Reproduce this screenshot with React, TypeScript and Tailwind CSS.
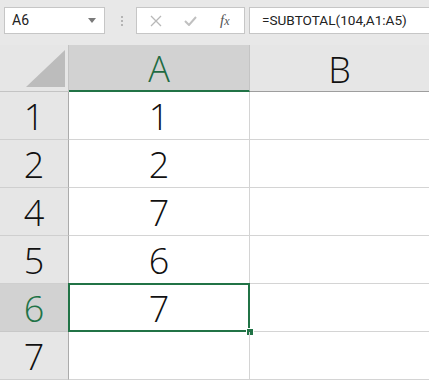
import React from 'react';

const rows = [
  { n: '1', v: '1' },
  { n: '2', v: '2' },
  { n: '4', v: '7' },
  { n: '5', v: '6' },
  { n: '6', v: '7', active: true },
  { n: '7', v: '' },
];

const FormulaBar: React.FC = () => (
  <div className="flex h-[45px] items-start bg-[#e8e8e8] pt-[7px] font-['Roboto',sans-serif]">
    <div className="ml-[4px] flex h-[27px] w-[101px] items-center border border-[#c6c6c6] bg-white pl-[7px] pr-[8px] text-[14px] text-[#222]">
      <span>A6</span>
      <svg className="ml-auto" width="8" height="5" viewBox="0 0 8 5">
        <path d="M0 0 L8 0 L4 5 Z" fill="#7a7a7a" />
      </svg>
    </div>
    <div className="ml-[15px] flex h-[27px] w-[3px] flex-col items-center justify-center gap-[2px]">
      <span className="h-[2px] w-[2px] bg-[#b4b4b4]" />
      <span className="h-[2px] w-[2px] bg-[#b4b4b4]" />
      <span className="h-[2px] w-[2px] bg-[#b4b4b4]" />
    </div>
    <div className="ml-[13px] flex h-[27px] w-[109px] items-center border border-[#c6c6c6] bg-white">
      <svg className="ml-[13px]" width="12" height="12" viewBox="0 0 12 12">
        <path d="M1 1 L11 11 M11 1 L1 11" stroke="#b8b8b8" strokeWidth="1.3" />
      </svg>
      <svg className="ml-[22px]" width="13" height="10" viewBox="0 0 13 10">
        <path d="M1 5 L5 9 L12 1" stroke="#c0c0c0" strokeWidth="2" fill="none" />
      </svg>
      <span className="ml-[23px] font-['Liberation_Serif',serif] text-[15px] italic text-[#555]">
        f<span className="text-[12px]">x</span>
      </span>
    </div>
    <div className="ml-[4px] flex h-[27px] flex-1 items-center border border-r-0 border-[#c6c6c6] bg-white pl-[12px] text-[13.6px] text-[#222]">
      =SUBTOTAL(104,A1:A5)
    </div>
  </div>
);

export default function App() {
  return (
    <div className="h-[380px] w-[429px] overflow-hidden bg-white font-['Open_Sans',sans-serif]">
      <FormulaBar />
      <div className="grid grid-cols-[69px_181px_179px] grid-rows-[47px_repeat(6,48px)] font-light">
        <div className="flex items-end justify-end border-r border-b border-[#c4c4c4] bg-[#e6e6e6] pr-[3px] pb-[4px]">
          <svg width="39" height="37" viewBox="0 0 39 37">
            <path d="M39 0 L39 37 L0 37 Z" fill="#bcbcbc" />
          </svg>
        </div>
        <div className="flex items-center justify-center border-r border-[#c4c4c4] border-b-2 border-b-[#217346] bg-[#d2d2d2] pt-[3px] text-[36px] leading-none text-[#1e6b42]">
          A
        </div>
        <div className="flex items-center justify-center border-b border-[#9e9e9e] bg-[#e6e6e6] pt-[3px] text-[36px] leading-none text-[#111]">
          B
        </div>
        {rows.map((r) => (
          <React.Fragment key={r.n}>
            <div
              className={
                r.active
                  ? 'flex items-center justify-center border-r border-b border-r-[#ababab] border-b-[#c8c8c8] bg-[#d2d2d2] pt-[3px] text-[36px] leading-none text-[#217346]'
                  : 'flex items-center justify-center border-r border-b border-r-[#ababab] border-b-[#cfcfcf] bg-[#e6e6e6] pt-[3px] text-[36px] leading-none text-[#111]'
              }
            >
              {r.n}
            </div>
            <div className="relative flex items-center justify-center border-r border-b border-[#d4d4d4] pt-[3px] text-[36px] leading-none text-[#111]">
              {r.v}
              {r.active && (
                <>
                  <div className="absolute -top-[1px] -left-[1px] -right-[1px] -bottom-[1px] border-2 border-[#217346]" />
                  <div className="absolute -right-[5px] -bottom-[5px] h-[8px] w-[8px] border border-white bg-[#217346]" />
                </>
              )}
            </div>
            <div className="border-b border-[#d4d4d4]" />
          </React.Fragment>
        ))}
      </div>
    </div>
  );
}
